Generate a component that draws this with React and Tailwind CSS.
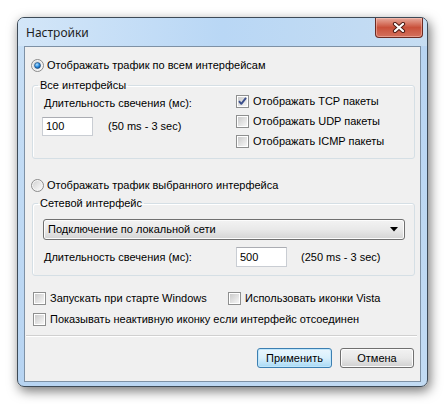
import React from 'react';

const ui = { fontFamily: '"Liberation Sans", Arial, sans-serif' };

const Radio = ({ checked }) => (
  <svg width="13" height="13" viewBox="0 0 13 13" className="shrink-0">
    <defs>
      <linearGradient id={checked ? 'rbOn' : 'rbOff'} x1="0" y1="0" x2="1" y2="1">
        <stop offset="0" stopColor="#d2d2d2" />
        <stop offset="1" stopColor="#fbfbfb" />
      </linearGradient>
      <radialGradient id="rbDot" cx="0.4" cy="0.35" r="0.7">
        <stop offset="0" stopColor="#b6e3ff" />
        <stop offset="0.55" stopColor="#2a8ce0" />
        <stop offset="1" stopColor="#0b4a8f" />
      </radialGradient>
    </defs>
    <circle cx="6.5" cy="6.5" r="6" fill="#f4f4f4" stroke="#8a8a8a" strokeWidth="1" />
    <circle cx="6.5" cy="6.5" r="4.5" fill={`url(#${checked ? 'rbOn' : 'rbOff'})`} />
    {checked && <circle cx="6.5" cy="6.5" r="3" fill="url(#rbDot)" stroke="#22466f" strokeWidth="0.6" />}
  </svg>
);

const Check = ({ checked }) => (
  <svg width="13" height="13" viewBox="0 0 13 13" className="shrink-0">
    <defs>
      <linearGradient id="cbFill" x1="0" y1="0" x2="1" y2="1">
        <stop offset="0" stopColor="#cbcbcb" />
        <stop offset="1" stopColor="#f6f6f6" />
      </linearGradient>
    </defs>
    <rect x="0.5" y="0.5" width="12" height="12" fill="#fff" stroke="#8e8f8f" />
    <rect x="2" y="2" width="9" height="9" fill="url(#cbFill)" stroke="#f4f4f4" strokeWidth="0.01" />
    {checked && (
      <path d="M3 6.2 L5.3 8.8 L10 2.8" fill="none" stroke="#3b4f8c" strokeWidth="1.9" strokeLinejoin="round" />
    )}
  </svg>
);

const Radiorow = ({ checked, children, className }) => (
  <div className={`flex items-center gap-[3px] h-[13px] pl-[6px] ${className}`}>
    <Radio checked={checked} />
    <span className="text-[11px] leading-[13px] whitespace-nowrap">{children}</span>
  </div>
);

const CheckItem = ({ checked, children, className = '' }) => (
  <div className={`flex items-center gap-[4px] h-[13px] ${className}`}>
    <Check checked={checked} />
    <span className="text-[11px] leading-[13px] whitespace-nowrap">{children}</span>
  </div>
);

const TextBox = ({ value, className = '' }) => (
  <div
    className={`h-[19px] bg-white border border-[#c9cdd3] border-t-[#abadb3] flex items-center pl-[3px] text-[11px] ${className}`}
  >
    {value}
  </div>
);

const Group = ({ title, className = '', children }) => (
  <fieldset className={`ml-[7px] w-[383px] border border-[#d5dfe5] rounded-[3px] shadow-[inset_1px_1px_0_#fff] ${className}`}>
    <legend className="ml-[5px] px-[2px] text-[11px] leading-[13px]">{title}</legend>
    {children}
  </fieldset>
);

const Button = ({ children, focused }) => (
  <div
    className={`h-[20px] flex items-center justify-center rounded-[3px] border text-[11px] ${
      focused
        ? 'w-[75px] border-[#3c7fb1] bg-gradient-to-b from-[#eaf6fd] via-[#d9f0fc] to-[#a7d9f5] shadow-[inset_0_0_0_1px_#c0e6fb]'
        : 'w-[74px] border-[#707070] bg-gradient-to-b from-[#f2f2f2] via-[#e8e8e8] to-[#d0d0d0] shadow-[inset_0_0_0_1px_#fcfcfc]'
    }`}
  >
    {children}
  </div>
);

export default function App() {
  return (
    <div className="w-[447px] h-[404px] bg-white pt-[17px] pl-[17px] text-black" style={ui}>
      <div className="relative w-[411px] h-[370px] flex flex-col rounded-[7px] border border-[#3d4a57] bg-gradient-to-br from-[#c9e0f6] via-[#b7d4f2] to-[#c2dbf3] shadow-[2px_4px_12px_rgba(0,0,0,0.55)]">
        <div className="h-[28px] shrink-0 flex items-center pl-[8px] pt-[2px] rounded-t-[6px] bg-gradient-to-r from-[#d3e6f8] via-[#b9d7f5] to-[#c6ddf2]">
          <span className="text-[12px] text-[#1e1e1e]" style={{ fontFamily: '"Noto Sans", "Open Sans", sans-serif' }}>
            Настройки
          </span>
        </div>
        <div className="absolute top-0 right-[4px] w-[48px] h-[20px] rounded-b-[4px] border border-t-0 border-[#6b2a22] bg-gradient-to-b from-[#e7a99c] via-[#c9503a] to-[#d3705c] flex items-center justify-center shadow-[inset_0_0_0_1px_rgba(255,210,200,0.45)]">
          <svg width="14" height="11" viewBox="0 0 14 11">
            <path d="M3 2 L11 9 M11 2 L3 9" stroke="#4a1a14" strokeWidth="4.2" strokeLinecap="round" />
            <path d="M3 2 L11 9 M11 2 L3 9" stroke="#ffffff" strokeWidth="2.3" strokeLinecap="round" />
          </svg>
        </div>

        <div className="flex-1 px-[6px] pb-[4px] flex">
          <div className="flex-1 border border-[#7e91a5] bg-[#f0f0f0] flex flex-col">
            <Radiorow checked className="mt-[12px]">Отображать трафик по всем интерфейсам</Radiorow>

            <Group title="Все интерфейсы" className="mt-[7px] h-[80px]">
              <div className="flex">
                <div className="w-[203px] pl-[9px] pt-[5px] flex flex-col">
                  <div className="ml-[2px] h-[13px] text-[11px] leading-[13px]">Длительность свечения (мс):</div>
                  <div className="mt-[7px] flex items-center">
                    <TextBox value="100" className="w-[51px]" />
                    <span className="ml-[15px] text-[11px]">(50 ms - 3 sec)</span>
                  </div>
                </div>
                <div className="pt-[3px] flex flex-col gap-[7px]">
                  <CheckItem checked>Отображать TCP пакеты</CheckItem>
                  <CheckItem>Отображать UDP пакеты</CheckItem>
                  <CheckItem>Отображать ICMP пакеты</CheckItem>
                </div>
              </div>
            </Group>

            <Radiorow className="mt-[20px]">Отображать трафик выбранного интерфейса</Radiorow>

            <Group title="Сетевой интерфейс" className="mt-[5px] h-[79px]">
              <div className="mt-[9px] ml-[10px] w-[362px] h-[21px] rounded-[3px] border border-[#707070] bg-gradient-to-b from-[#f3f3f3] via-[#e9e9e9] to-[#d4d4d4] shadow-[inset_0_0_0_1px_#fcfcfc] flex items-center pl-[4px] pr-[6px]">
                <span className="flex-1 text-[11px]">Подключение по локальной сети</span>
                <svg width="8" height="5" viewBox="0 0 8 5">
                  <path d="M0 0 H8 L4 4.5 Z" fill="#000" />
                </svg>
              </div>
              <div className="mt-[7px] flex items-center h-[20px] pl-[11px]">
                <span className="w-[192px] text-[11px]">Длительность свечения (мс):</span>
                <TextBox value="500" className="w-[51px] h-[20px]" />
                <span className="ml-[14px] text-[11px]">(250 ms - 3 sec)</span>
              </div>
            </Group>

            <div className="mt-[16px] pl-[8px] flex">
              <CheckItem className="w-[195px]">Запускать при старте Windows</CheckItem>
              <CheckItem>Использовать иконки Vista</CheckItem>
            </div>
            <div className="mt-[8px] pl-[8px]">
              <CheckItem>Показывать неактивную иконку если интерфейс отсоединен</CheckItem>
            </div>

            <div className="mt-[9px] ml-[1px] w-[391px] border-t border-[#d0d0d0] border-b border-b-white" />

            <div className="mt-[11px] pr-[6px] flex justify-end gap-[8px]">
              <Button focused>Применить</Button>
              <Button>Отмена</Button>
            </div>
          </div>
        </div>
      </div>
    </div>
  );
}
